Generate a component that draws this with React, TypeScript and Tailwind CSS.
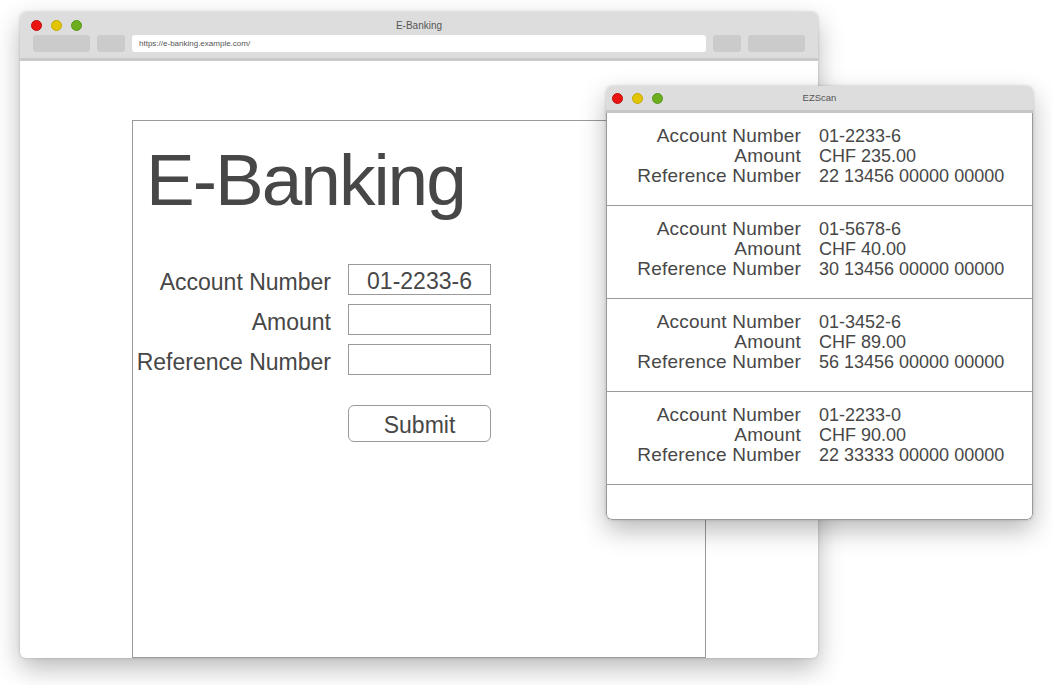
import React from "react";

const Lights = () => (
  <div className="flex items-center gap-[9px]">
    <span className="block w-[11px] h-[11px] rounded-full bg-[#ea1410] border border-[#c20d0a]" />
    <span className="block w-[11px] h-[11px] rounded-full bg-[#e3c400] border border-[#c4a900]" />
    <span className="block w-[11px] h-[11px] rounded-full bg-[#6dae1e] border border-[#5b9619]" />
  </div>
);

const scans = [
  ["01-2233-6", "CHF 235.00", "22 13456 00000 00000"],
  ["01-5678-6", "CHF 40.00", "30 13456 00000 00000"],
  ["01-3452-6", "CHF 89.00", "56 13456 00000 00000"],
  ["01-2233-0", "CHF 90.00", "22 33333 00000 00000"],
];

const labels = ["Account Number", "Amount", "Reference Number"];

export default function App() {
  return (
    <div className="relative w-[1052px] h-[685px] bg-white overflow-hidden font-['Liberation_Sans',Arial,sans-serif] text-[#474747]">
      {/* Browser window */}
      <div className="absolute left-[20px] top-[12px] w-[798px] h-[646px] rounded-[6px] bg-white overflow-hidden flex flex-col shadow-[0_10px_26px_rgba(0,0,0,0.28),0_0_3px_rgba(0,0,0,0.18)]">
        <div className="bg-[#dddddd] border-b-[3px] border-[#c9c9c9] pt-[8px] pb-[6px]">
          <div className="grid grid-cols-[1fr_auto_1fr] items-center h-[10px] px-[11px]">
            <Lights />
            <span className="text-[10px] leading-none text-[#555]">E-Banking</span>
            <span />
          </div>
          <div className="flex gap-[7px] px-[13px] mt-[5px] h-[17px]">
            <div className="w-[57px] rounded-[3px] bg-[#cbcbcb]" />
            <div className="w-[28px] rounded-[3px] bg-[#cbcbcb]" />
            <div className="flex-1 rounded-[3px] bg-white flex items-center px-[7px] text-[8px] leading-none text-[#555]">
              https://e-banking.example.com/
            </div>
            <div className="w-[28px] rounded-[3px] bg-[#cbcbcb]" />
            <div className="w-[57px] rounded-[3px] bg-[#cbcbcb]" />
          </div>
        </div>
        <div className="flex-1 flex flex-col pt-[59px] pl-[112px]">
          <div className="flex-1 w-[574px] border border-[#9a9a9a] flex flex-col">
            <h1 className="pt-[22px] pl-[13px] text-[73px] leading-none tracking-[-2px] text-[#474747]">
              E-Banking
            </h1>
            <div className="mt-[48px] grid grid-cols-[198px_143px] gap-x-[17px] gap-y-[9px]">
              <div className="h-[31px] pt-[3px] text-[23px] leading-[31px] text-right">Account Number</div>
              <div className="h-[31px] pt-[3px] border border-[#9a9a9a] flex items-center justify-center text-[23px] leading-none">
                01-2233-6
              </div>
              <div className="h-[31px] pt-[3px] text-[23px] leading-[31px] text-right">Amount</div>
              <div className="h-[31px] border border-[#9a9a9a]" />
              <div className="h-[31px] pt-[3px] text-[23px] leading-[31px] text-right">Reference Number</div>
              <div className="h-[31px] border border-[#9a9a9a]" />
              <div />
              <button className="mt-[21px] h-[37px] pt-[3px] rounded-[6px] border border-[#9a9a9a] bg-white flex items-center justify-center text-[23px] leading-none text-[#474747]">
                Submit
              </button>
            </div>
          </div>
        </div>
      </div>

      {/* EZScan window */}
      <div className="absolute left-[606px] top-[86px] w-[427px] h-[434px] rounded-[6px] bg-white overflow-hidden flex flex-col shadow-[0_10px_26px_rgba(0,0,0,0.28),0_0_3px_rgba(0,0,0,0.18)]">
        <div className="h-[27px] shrink-0 bg-[#dddddd] border-b-[3px] border-[#c6c6c6] grid grid-cols-[1fr_auto_1fr] items-center px-[6px]">
          <Lights />
          <span className="text-[9.5px] leading-none text-[#555]">EZScan</span>
          <span />
        </div>
        <div className="flex-1 flex flex-col border-x border-b border-[#9a9a9a] rounded-b-[6px]">
          {scans.map((s, i) => (
            <div key={i} className="border-b border-[#9a9a9a] pt-[13px] pb-[19px]">
              <div className="grid grid-cols-[194px_1fr] gap-x-[18px] items-baseline">
                {labels.map((l, j) => (
                  <React.Fragment key={j}>
                    <div className="text-[19px] leading-[20px] tracking-[0.2px] text-right">{l}</div>
                    <div className="text-[18px] leading-[20px]">{s[j]}</div>
                  </React.Fragment>
                ))}
              </div>
            </div>
          ))}
        </div>
      </div>
    </div>
  );
}
